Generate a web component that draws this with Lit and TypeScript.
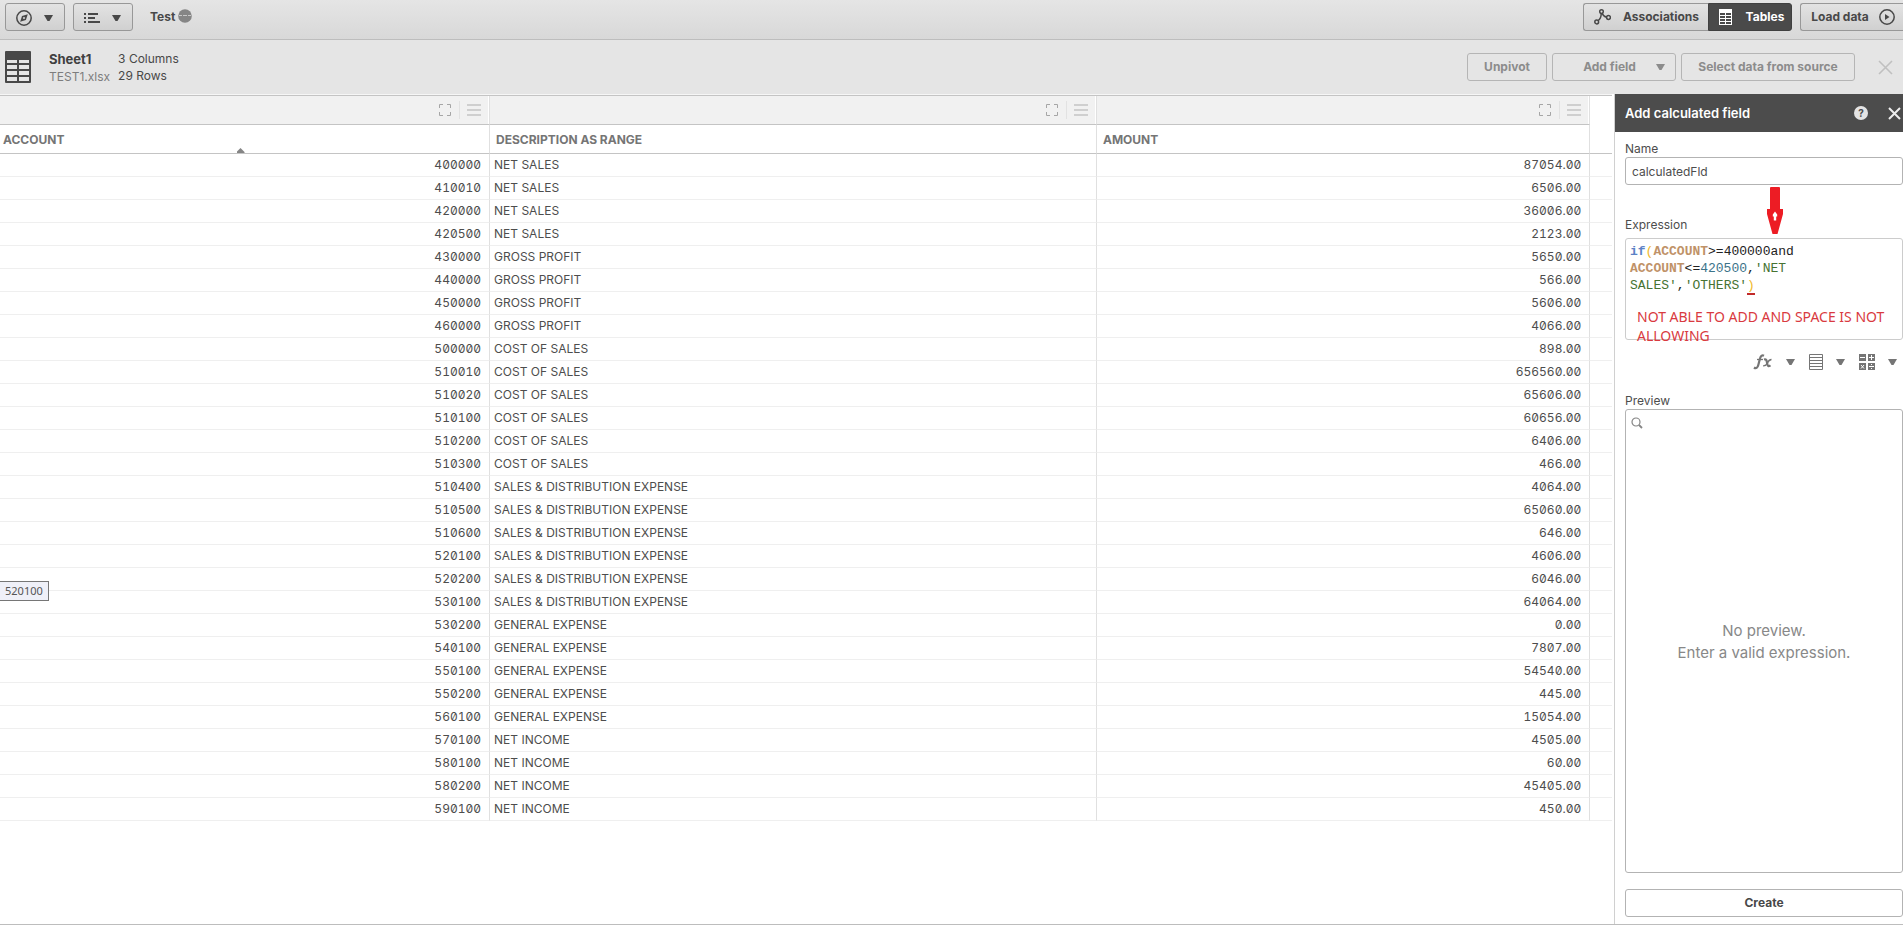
import { LitElement, html, svg, css } from "lit";
import { customElement, property } from "lit/decorators.js";

type Row = [account: string, description: string, amount: string];

const ROWS: Row[] = [
  ["400000", "NET SALES", "87054.00"],
  ["410010", "NET SALES", "6506.00"],
  ["420000", "NET SALES", "36006.00"],
  ["420500", "NET SALES", "2123.00"],
  ["430000", "GROSS PROFIT", "5650.00"],
  ["440000", "GROSS PROFIT", "566.00"],
  ["450000", "GROSS PROFIT", "5606.00"],
  ["460000", "GROSS PROFIT", "4066.00"],
  ["500000", "COST OF SALES", "898.00"],
  ["510010", "COST OF SALES", "656560.00"],
  ["510020", "COST OF SALES", "65606.00"],
  ["510100", "COST OF SALES", "60656.00"],
  ["510200", "COST OF SALES", "6406.00"],
  ["510300", "COST OF SALES", "466.00"],
  ["510400", "SALES & DISTRIBUTION EXPENSE", "4064.00"],
  ["510500", "SALES & DISTRIBUTION EXPENSE", "65060.00"],
  ["510600", "SALES & DISTRIBUTION EXPENSE", "646.00"],
  ["520100", "SALES & DISTRIBUTION EXPENSE", "4606.00"],
  ["520200", "SALES & DISTRIBUTION EXPENSE", "6046.00"],
  ["530100", "SALES & DISTRIBUTION EXPENSE", "64064.00"],
  ["530200", "GENERAL EXPENSE", "0.00"],
  ["540100", "GENERAL EXPENSE", "7807.00"],
  ["550100", "GENERAL EXPENSE", "54540.00"],
  ["550200", "GENERAL EXPENSE", "445.00"],
  ["560100", "GENERAL EXPENSE", "15054.00"],
  ["570100", "NET INCOME", "4505.00"],
  ["580100", "NET INCOME", "60.00"],
  ["580200", "NET INCOME", "45405.00"],
  ["590100", "NET INCOME", "450.00"],
];

const icon = (w: number, h: number, body: unknown) =>
  html`<svg width=${w} height=${h} viewBox="0 0 ${w} ${h}" aria-hidden="true">${body}</svg>`;

const caret = icon(9, 6, svg`<path d="M0 0h9L5.5 6h-2z" fill="currentColor"/>`);

const compass = icon(16, 16, svg`
  <circle cx="8" cy="8" r="7.2" fill="none" stroke="currentColor" stroke-width="1.5"/>
  <path fill-rule="evenodd" fill="currentColor" d="M11.8 4.2 9.9 10 4.2 11.8 6 6zM8 7a1 1 0 1 0 0 2 1 1 0 0 0 0-2z"/>`);

const list = icon(16, 12, svg`
  <path fill="currentColor" d="M0 1h2v2H0zM0 5h2v2H0zM0 9h2v2H0zM4 1h10v2H4zM4 5h7v2H4zM4 9h12v2H4z"/>`);

const ellipsis = icon(14, 14, svg`
  <circle cx="7" cy="7" r="6.8" fill="#858585"/>
  <path fill="#c8c8c8" d="M1 6h3v1H1zM5 6h4v1H5zM10 6h3v1h-3z"/>`);

const sheet = icon(26, 32, svg`
  <rect width="26" height="32" rx="1" fill="#484848"/>
  <path fill="#e5e5e5" d="M2 9h10v3H2zM14 9h10v3H14zM2 14h10v4H2zM14 14h10v4H14zM2 20h10v4H2zM14 20h10v4H14zM2 26h10v4H2zM14 26h10v4H14z"/>`);

const branches = icon(17, 16, svg`
  <g fill="none" stroke="currentColor" stroke-width="1.5">
    <circle cx="7.5" cy="2.6" r="1.8"/><circle cx="14.5" cy="8.5" r="1.9"/><circle cx="2.7" cy="13" r="1.9"/>
    <path d="M7.2 4.4C7.2 8 6.5 10 4 11.6M8.2 4.3C9 6.5 10.500 8 12.6 8.300"/>
  </g>`);

const tables = icon(13, 16, svg`
  <rect width="13" height="16" fill="#fff"/>
  <path fill="#4a4a4a" d="M1 4h5v2H1zM7 4h5v2H7zM1 7h5v2H1zM7 7h5v2H7zM1 10h5v2H1zM7 10h5v2H7zM1 13h5v2H1zM7 13h5v2H7z"/>`);

const play = icon(16, 16, svg`
  <circle cx="8" cy="8" r="7.2" fill="none" stroke="currentColor" stroke-width="1.5"/>
  <path d="M6 5l4.500 3L6 11z" fill="currentColor"/>`);

const cross = (s: number, w: number) =>
  icon(s, s, svg`<path d="M1 1L${s - 1} ${s - 1}M${s - 1} 1L1 ${s - 1}" stroke="currentColor" stroke-width=${w}/>`);

const expand = icon(12, 12, svg`
  <path d="M.5 4V.5H4M8 .5h3.500V4M11.500 8v3.500H8M4 11.500H.5V8" fill="none" stroke="#a6a6a6"/>`);

const burger = icon(14, 12, svg`<path d="M0 0h14v2H0zM0 5h14v2H0zM0 10h14v2H0z" fill="#cfcfcf"/>`);

const fieldList = icon(14, 16, svg`
  <path fill="none" stroke="currentColor" d="M.5 .5h13v15H.5zM0 3.500h14M0 6.500h14M0 9.500h14M0 12.500h14"/>`);

const operators = icon(16, 16, svg`
  <path fill="currentColor" d="M0 0h7v7H0zM9 0h7v7H9zM0 9h7v7H0zM9 9h7v7H9z"/>
  <path stroke="#fff" fill="none" d="M1 3.500h5M10 3.500h5M12.500 1v5M2 11l3 3.500M5 11l-3 3.500M10 12.500h5M12.500 10v1M12.500 14v1"/>`);

const search = icon(12, 12, svg`
  <circle cx="5" cy="5" r="4" fill="none" stroke="#858585" stroke-width="1.2"/>
  <path d="M8 8l3 3" stroke="#858585" stroke-width="1.8"/>`);

const fx = icon(20, 16, svg`
  <g fill="none" stroke="currentColor">
    <path stroke-width="2.2" d="M1 13.500c2 1.500 3.600.3 4.300-2.500L7 4.500C7.700 2 9 .700 11 1.700"/>
    <path stroke-width="1.300" d="M4 5.500h6"/>
    <path stroke-width="2.200" d="M11 5.500c2.500-.700 2.700 1 3.200 4s1.300 3.200 3.300 1.800"/>
    <path stroke-width="1.500" d="M18.500 5.500c-2.500 0-3.500 2-4.500 4s-2 2.500-3.800 2.300"/>
  </g>`);

@customElement("table-toolbar")
export class TableToolbar extends LitElement {
  static styles = css`
    :host { display: block; color: #484848; font: 12px/16px Inter, sans-serif; }
    svg { display: block; flex: none; }
    .top, .sub, .group, .meta { display: flex; align-items: center; }
    .top {
      box-sizing: border-box; height: 40px; padding: 0 0 6px 5px; gap: 8px;
      background: linear-gradient(#e5e5e5, #d8d8d8); border-bottom: 1px solid #bdbdbd;
    }
    .sub { box-sizing: border-box; height: 54px; padding: 0 10px 0 5px; background: #e5e5e5; }
    button {
      box-sizing: border-box; height: 28px; display: flex; align-items: center; justify-content: center;
      font: 700 12px/16px Inter, sans-serif; color: inherit; white-space: nowrap; padding: 0 10px;
      border: 1px solid #989898; border-radius: 3px; background: linear-gradient(#e3e3e3, #d0d0d0);
    }
    .menu { width: 60px; gap: 12px; padding: 2px 8px 0 6px; }
    .app { display: flex; gap: 3px; font-weight: 700; margin: 0 auto 0 9px; align-items: center; }
    .app svg { margin-bottom: 2px; }
    .left { border-radius: 3px 0 0 3px; gap: 12px; border-right: 0; width: 125px; padding: 0 7px 0 8px; }
    .right { border-radius: 0 3px 3px 0; gap: 14px; color: #fff; background: #4a4a4a; border-color: #404040; width: 84px; padding: 0 7px 0 10px; }
    .load { gap: 10px; border-right: 0; border-radius: 3px 0 0 3px; width: 103px; padding: 0 9px 0 11px; }
    .names { margin: 2px 0 0 18px; color: #7d7d7d; line-height: 18px; }
    .names b { display: block; font-size: 13px; color: #404040; }
    .counts { margin: 0 auto 0 8px; line-height: 17px; }
    .actions { display: flex; gap: 5px; }
    .sub button { background: none; border-color: #b5b5b5; color: #8c8c8c; }
    .unpivot { width: 80px; }
    .field { width: 124px; }
    .field span { flex: 1; text-align: center; }
    .source { width: 174px; }
    .sub .close { border: 0; color: #c0c0c0; padding: 0; margin-left: 23px; }
  `;
  render() {
    return html`
      <header class="top">
        <button class="menu" aria-label="Navigation">${compass}${caret}</button>
        <button class="menu" aria-label="Menu">${list}${caret}</button>
        <div class="app"><span>Test</span>${ellipsis}</div>
        <div class="group">
          <button class="left">${branches}Associations</button>
          <button class="right">${tables}Tables</button>
        </div>
        <button class="load">Load data${play}</button>
      </header>
      <section class="sub">
        ${sheet}
        <div class="names"><b>Sheet1</b><span>TEST1.xlsx</span></div>
        <div class="counts">3 Columns<br />29 Rows</div>
        <div class="actions">
          <button class="unpivot">Unpivot</button>
          <button class="field"><span>Add field</span>${caret}</button>
          <button class="source">Select data from source</button>
        </div>
        <button class="close" aria-label="Close">${cross(15, 1.6)}</button>
      </section>`;
  }
}

@customElement("data-grid")
export class DataGrid extends LitElement {
  @property({ attribute: false }) rows: Row[] = [];
  static styles = css`
    :host { display: block; position: relative; color: #4d4d4d; font: 12px/16px Inter, sans-serif; }
    table { width: 100%; table-layout: fixed; border-collapse: separate; border-spacing: 0; border-top: 1px solid #c4c4c4; }
    .c1 { width: 30.4%; } .c2 { width: 37.65%; } .c3 { width: 30.6%; }
    td, th { box-sizing: border-box; padding: 0 8px 0 4px; border-right: 1px solid #e0e0e0; text-align: left; white-space: nowrap; }
    td { height: 23px; border-bottom: 1px solid #efefef; }
    td:last-child, th:last-child { border-right: 0; }
    .tools th { height: 29px; padding: 0 8px 0 0; background: #f1f1f1; border-bottom: 1px solid #c4c4c4; box-shadow: inset -1px 0 #fff; }
    .tools th:last-child { background: none; border-bottom-color: transparent; }
    .bar { display: flex; justify-content: flex-end; align-items: center; }
    button { display: flex; border: 0; background: none; padding: 3px 0 3px 7px; }
    .grow { padding: 3px 8px 3px 0; border-right: 1px solid #e2e2e2; }
    .names th { height: 29px; padding: 2px 8px 0 6px; border-bottom: 1px solid #c4c4c4; font-weight: 700; color: #757575; position: relative; }
    .names th:first-child { padding-left: 3px; }
    .sort { position: absolute; left: 50%; bottom: 0; width: 8px; height: 5px; margin-left: -8px; background: #858585; clip-path: polygon(50% 0, 100% 80%, 100% 100%, 0 100%, 0 80%); }
    .num { text-align: right; font-feature-settings: "zero", "tnum"; }
    .tip {
      position: absolute; left: -1px; top: 487px; box-sizing: border-box; height: 20px; padding: 0 5px;
      font: 11px/18px "Noto Sans", sans-serif; color: #555; background: #eff0f8; border: 1px solid #767676;
    }
  `;
  render() {
    const tools = html`<div class="bar"><button class="grow" aria-label="Expand">${expand}</button><button aria-label="Column menu">${burger}</button></div>`;
    return html`
      <table>
        <colgroup><col class="c1" /><col class="c2" /><col class="c3" /><col /></colgroup>
        <thead>
          <tr class="tools"><th>${tools}</th><th>${tools}</th><th>${tools}</th><th></th></tr>
          <tr class="names"><th>ACCOUNT<span class="sort"></span></th><th>DESCRIPTION AS RANGE</th><th>AMOUNT</th><th></th></tr>
        </thead>
        <tbody>
          ${this.rows.map(([a, d, m]) => html`<tr><td class="num">${a}</td><td>${d}</td><td class="num">${m}</td><td></td></tr>`)}
        </tbody>
      </table>
      <div class="tip" role="tooltip">520100</div>`;
  }
}

@customElement("field-panel")
export class FieldPanel extends LitElement {
  static styles = css`
    :host { display: flex; flex-direction: column; background: #fff; color: #4d4d4d; font: 12px/16px Inter, sans-serif; }
    svg { display: block; }
    .head {
      display: flex; align-items: center; height: 38px; padding-left: 10px; gap: 20px;
      background: #4c4c4c; color: #fff; font-size: 13px; font-weight: 600; flex: none;
    }
    .head span { flex: 1; }
    .head button { border: 0; background: none; color: #eee; padding: 0; }
    .head .help {
      width: 14px; height: 14px; border-radius: 50%; background: #e4e4e4; color: #4c4c4c;
      font: 700 10px/14px Inter, sans-serif;
    }
    .head .close { margin-right: 2px; }
    .body { flex: 1; display: flex; flex-direction: column; padding: 9px 0 7px 10px; }
    .box { box-sizing: border-box; border: 1px solid #b3b3b3; border-radius: 3px; background: #fff; }
    input { width: 100%; height: 28px; padding: 0 6px; font: inherit; color: inherit; }
    .gap { position: relative; height: 32px; }
    .arrow { position: absolute; left: 50%; top: 2px; margin-left: 3px; }
    .expr {
      height: 102px; position: relative; margin-top: 5px; padding: 4px;
      font: 13px/17px "Liberation Mono", monospace; color: #222; white-space: pre; border-color: #ccc;
    }
    .fn { color: #5b82c6; font-weight: 700; } .br { color: #f0b92c; } .fld { color: #bf9268; font-weight: 700; }
    .n { color: #3c7389; } .s { color: #467332; }
    .err { box-shadow: 0 2px #c22a2a; }
    .note {
      position: absolute; left: 11px; top: 68px; white-space: pre; color: #d93a40;
      font: 14px/19px "Noto Sans", sans-serif;
    }
    .pickers { display: flex; justify-content: flex-end; gap: 14px; margin-top: 14px; height: 16px; padding-right: 6px; }
    .pickers button { display: flex; align-items: center; gap: 13px; padding: 0; border: 0; background: none; color: #757575; }
    .label { margin-top: 23px; }
    .preview { flex: 1; display: flex; flex-direction: column; }
    .find { padding: 7px 5px 0; }
    .empty { flex: 1; display: flex; flex-direction: column; justify-content: center; text-align: center; font-size: 15px; line-height: 22px; color: #888; padding-bottom: 18px; }
    .create { flex: none; height: 28px; margin-top: 16px; padding: 0; font: 700 12px/16px Inter, sans-serif; color: #484848; }
  `;
  render() {
    return html`
      <div class="head"><span>Add calculated field</span><button class="help" aria-label="Help">?</button><button class="close" aria-label="Close">${cross(13, 2)}</button></div>
      <div class="body">
        <label for="name">Name</label>
        <input id="name" class="box" .value=${"calculatedFld"} />
        <div class="gap">
          <svg class="arrow" width="16" height="47" viewBox="0 0 16 47" aria-hidden="true">
            <path fill="#ed1c24" fill-rule="evenodd" d="M4 0h8q1 0 1 1v21h3v5l-5.500 20h-5L0 27v-5h3V1q0-1 1-1zM8 24.500l-2.200 3v2h1v4h2.400v-4h1v-2z"/>
          </svg>
        </div>
        <span id="expr-label">Expression</span>
        <div class="box expr" role="textbox" aria-multiline="true" aria-labelledby="expr-label" contenteditable="true" spellcheck="false"><div><span class="fn">if</span><span class="br">(</span><span class="fld">ACCOUNT</span><span>&gt;=400000and</span></div><div><span class="fld">ACCOUNT</span><span>&lt;=</span><span class="n">420500</span><span>,</span><span class="s">'NET</span></div><div><span class="s">SALES'</span><span>,</span><span class="s">'OTHERS'</span><span class="br err">)</span></div><div class="note">NOT ABLE TO ADD AND SPACE IS NOT
ALLOWING</div></div>
        <div class="pickers">
          <button aria-label="Functions">${fx}${caret}</button>
          <button aria-label="Fields">${fieldList}${caret}</button>
          <button aria-label="Operators">${operators}${caret}</button>
        </div>
        <span class="label">Preview</span>
        <div class="box preview">
          <div class="find">${search}</div>
          <div class="empty"><span>No preview.</span><span>Enter a valid expression.</span></div>
        </div>
        <button class="box create">Create</button>
      </div>`;
  }
}

@customElement("app-root")
export class AppRoot extends LitElement {
  static styles = css`
    :host { display: flex; flex-direction: column; box-sizing: border-box; min-height: 100vh; background: #fff; border-bottom: 1px solid #bdbdbd; }
    main { flex: 1; display: flex; }
    .grid { flex: 1; min-width: 0; margin-right: 2px; padding-top: 1px; background: linear-gradient(#f6f6f6 1px, #fff 1px); }
    .panel { width: 288px; border-left: 1px solid #d0d0d0; }
  `;
  render() {
    return html`
      <table-toolbar></table-toolbar>
      <main>
        <data-grid class="grid" .rows=${ROWS}></data-grid>
        <field-panel class="panel"></field-panel>
      </main>`;
  }
}
